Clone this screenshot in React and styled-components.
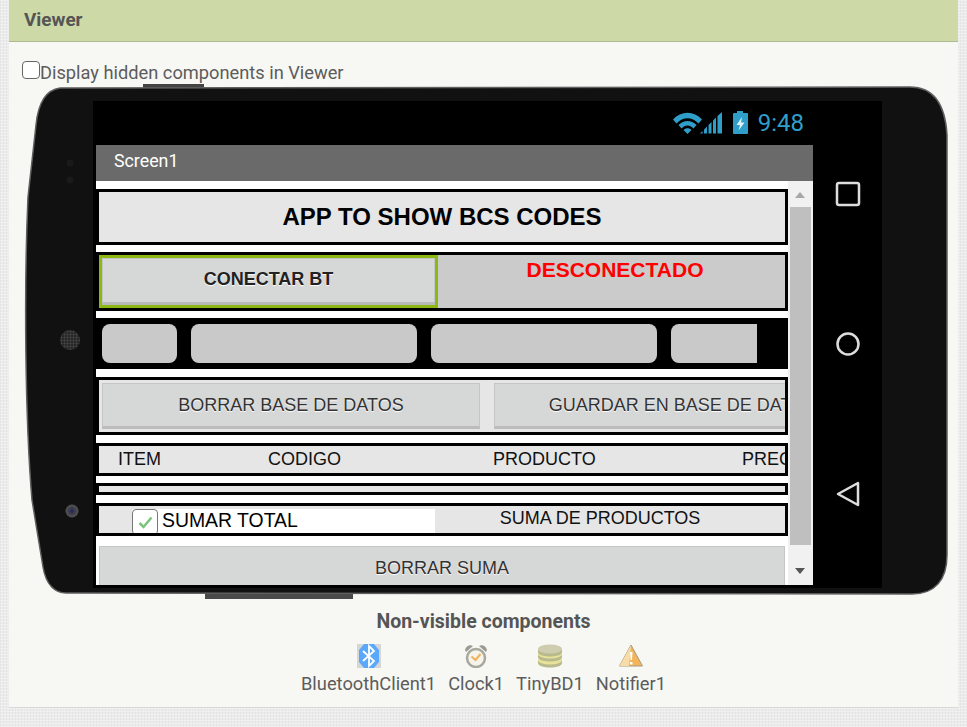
import React from 'react';
import styled, { createGlobalStyle } from 'styled-components';

const GlobalStyle = createGlobalStyle`
  html, body {
    margin: 0;
    padding: 0;
  }
  body {
    height: 727px;
    overflow: hidden;
    background-color: #ebebeb;
    background-image:
      repeating-linear-gradient(0deg, rgba(255,255,255,.35) 0 1px, transparent 1px 3px),
      repeating-linear-gradient(90deg, rgba(0,0,0,.03) 0 1px, transparent 1px 3px);
    font-family: Roboto, "Liberation Sans", sans-serif;
  }
`;

const Panel = styled.section`
  width: 949px;
  height: 708px;
  margin-left: 9px;
  background: #f7f8f3;
  color: #555;
  border-bottom: 1px solid #d8d8d8;
  box-sizing: border-box;
`;

const PanelHeader = styled.header`
  height: 42px;
  box-sizing: border-box;
  padding: 0 0 3px 15px;
  display: flex;
  align-items: center;
  background: #cddaa8;
  border-bottom: 1px solid #aebb90;
  font-size: 18.9px;
  font-weight: 700;
  color: #555;
`;

const HiddenToggle = styled.label`
  height: 45px;
  box-sizing: border-box;
  padding: 18px 0 0 13px;
  display: flex;
  align-items: flex-start;
  font-size: 18.25px;
  line-height: 26px;
  color: #5c5c5c;
`;

const ToggleBox = styled.input`
  appearance: none;
  width: 18px;
  height: 18px;
  margin: 1px 0 0;
  box-sizing: border-box;
  background: #fff;
  border: 1.5px solid #666;
  border-radius: 4px;
`;

const Phone = styled.div`
  position: relative;
  width: 920px;
  height: 508px;
  margin-left: 18px;
  box-sizing: border-box;
  padding: 14px 0 0 66px;
`;

const PhoneShell = styled.svg`
  position: absolute;
  left: 0;
  top: -3px;
  overflow: visible;
`;

const PhoneScreen = styled.div`
  position: relative;
  width: 789px;
  height: 487px;
  box-sizing: border-box;
  padding: 0 0 0 3px;
  display: flex;
  background: #000;
`;

const ScreenMain = styled.div`
  width: 717px;
`;

const StatusBar = styled.div`
  height: 44px;
  box-sizing: border-box;
  padding: 0 9px 0 0;
  display: flex;
  align-items: center;
  justify-content: flex-end;
  gap: 9px;
  color: #2f9fca;
  font-size: 24px;
  font-weight: 400;
`;

const TitleBar = styled.div`
  height: 36px;
  box-sizing: border-box;
  padding: 0 0 5px 18px;
  display: flex;
  align-items: center;
  background: #6a6a6a;
  color: #fff;
  font-size: 17.8px;
`;

const ScreenBody = styled.div`
  height: 404px;
  display: flex;
  overflow: hidden;
  background: #fff;
  font-family: "Liberation Sans", Arial, sans-serif;
`;

const RowList = styled.div`
  width: 692px;
  box-sizing: border-box;
  padding-top: 8px;
  display: flex;
  flex-direction: column;
`;

const Row = styled.div`
  height: ${(p) => p.$h}px;
  margin-bottom: ${(p) => p.$gap}px;
  flex: none;
  box-sizing: border-box;
  border: 3px solid #000;
  background: ${(p) => p.$bg || '#e6e6e6'};
  display: flex;
  align-items: ${(p) => p.$align || 'center'};
  overflow: hidden;
`;

const AppTitle = styled.div`
  width: 100%;
  text-align: center;
  color: #000;
  font-size: 24px;
  font-weight: 700;
`;

const ConnectButton = styled.div`
  width: 339px;
  height: 53px;
  flex: none;
  box-sizing: border-box;
  padding-bottom: 4px;
  border: 3px solid #8cb814;
  background: #d6d8d7;
  box-shadow: inset 0 -3px 0 #b9b9b9, inset 0 0 0 1px #c4c6c5;
  display: flex;
  align-items: center;
  justify-content: center;
  color: #222;
  font-size: 18px;
  font-weight: 700;
  text-shadow: 0 1px 1px #fff;
`;

const StatusText = styled.div`
  width: 354px;
  padding: 3px 0 0;
  flex: none;
  text-align: center;
  color: #f00;
  font-size: 21px;
  font-weight: 700;
`;

const FieldRow = styled(Row)`
  padding-left: 3px;
  gap: 14px;
`;

const Field = styled.div`
  width: ${(p) => p.$w}px;
  height: 39px;
  flex: none;
  background: #c9c9c9;
  border-radius: ${(p) => (p.$cut ? '8px 0 0 8px' : '8px')};
`;

const ButtonRow = styled(Row)`
  padding-left: 3px;
  gap: 14px;
`;

const GrayButton = styled.div`
  width: 378px;
  height: 46px;
  flex: none;
  box-sizing: border-box;
  border: 1px solid #c4c6c5;
  border-bottom: 3px solid #bcbcbc;
  background: #d6d8d7;
  display: flex;
  align-items: center;
  justify-content: center;
  white-space: nowrap;
  color: #333;
  font-size: 18px;
  text-shadow: 0 1px 1px #fff;
`;

const ColumnLabel = styled.div`
  width: ${(p) => p.$w}px;
  flex: none;
  color: #111;
  font-size: 18px;
  white-space: nowrap;
`;

const HeaderRow = styled(Row)`
  padding-left: 19px;
`;

const TotalCheck = styled.div`
  width: 303px;
  height: 24px;
  margin: 3px 0 0 33px;
  flex: none;
  display: flex;
  align-items: flex-start;
  background: #fff;
  color: #000;
  font-size: 19.4px;
  line-height: 22px;
`;

const CheckBox = styled.span`
  width: 26px;
  height: 26px;
  margin-right: 4px;
  flex: none;
  box-sizing: border-box;
  display: flex;
  align-items: center;
  justify-content: center;
  border: 1.5px solid #777;
  border-radius: 4px;
  background: #fff;
`;

const SumLabel = styled.div`
  width: 330px;
  padding-top: 2px;
  flex: none;
  text-align: center;
  color: #111;
  font-size: 18px;
`;

const WideButton = styled.div`
  height: 46px;
  margin-left: 3px;
  width: 686px;
  flex: none;
  box-sizing: border-box;
  border: 1px solid #c4c6c5;
  background: #d6d8d7;
  padding-top: 11px;
  text-align: center;
  color: #333;
  font-size: 18px;
  text-shadow: 0 1px 1px #fff;
`;

const ScrollTrack = styled.div`
  position: relative;
  width: 25px;
  height: 404px;
  background: #f1f1f1;
`;

const ScrollThumb = styled.div`
  width: 21px;
  height: 338px;
  margin: 26px 0 0 2px;
  background: #bfbfbf;
`;

const ScrollArrow = styled.span`
  position: absolute;
  left: 7px;
  ${(p) => (p.$down ? 'bottom: 11px;' : 'top: 11px;')}
  border-left: 5.5px solid transparent;
  border-right: 5.5px solid transparent;
  ${(p) => (p.$down ? 'border-top: 6px solid #555;' : 'border-bottom: 6px solid #a8a8a8;')}
`;

const NavColumn = styled.div`
  width: 69px;
  box-sizing: border-box;
  padding-top: 80px;
  display: flex;
  flex-direction: column;
  align-items: center;
  gap: 124px;
`;

const NonVisible = styled.div`
  padding-top: 15px;
  display: flex;
  flex-direction: column;
  align-items: center;
`;

const NonVisibleTitle = styled.div`
  font-size: 19.5px;
  font-weight: 700;
  line-height: 24px;
  color: #555;
`;

const ComponentList = styled.div`
  margin-top: 10px;
  display: flex;
  gap: 12px;
`;

const ComponentItem = styled.div`
  display: flex;
  flex-direction: column;
  align-items: center;
  font-size: 18.3px;
  line-height: 24px;
  color: #5c5c5c;
`;

const ComponentIcon = styled.svg`
  display: block;
  margin-bottom: 4px;
`;

const StatusIcons = () => (
  <svg width="76" height="26" viewBox="0 0 76 26" aria-hidden="true">
    <g fill="#2f9fca">
      <g transform="translate(0 1.5)">
        <path d="M0 8 C8 -1 21 -1 29 8 L25.500 12 C19 5 10 5 3.500 12 Z" />
        <path d="M5.500 13.500 C11 8 18 8 23.500 13.500 L20.500 17 C17 13 12 13 8.500 17 Z" />
        <path d="M10.500 18.500 C13 16 16 16 18.500 18.500 L14.500 22.500 Z" />
      </g>
      <path d="M27 23.500 L29.500 21 V23.500 Z" />
      <path d="M31 23.500 V19.500 L34 16.500 V23.500 Z" />
      <path d="M35.500 23.500 V15 L38.500 12 V23.500 Z" />
      <path d="M40 23.500 V10.500 L43 7.500 V23.500 Z" />
      <path d="M44.500 23.500 V6 L49 2 V23.500 Z" />
      <path d="M64 1 H70 V3 H74 A1 1 0 0 1 75 4 V23 A1 1 0 0 1 74 24 H61 A1 1 0 0 1 60 23 V4 A1 1 0 0 1 61 3 H64 Z" />
    </g>
    <path d="M69 7 L63.500 15 L67 15 L65.500 20.500 L71.500 12.500 L68 12.500 Z" fill="#dff3fb" />
  </svg>
);

const BluetoothIcon = () => (
  <ComponentIcon width="24" height="24" viewBox="0 0 24 24">
    <rect width="24" height="24" fill="#d6d6d6" />
    <path d="M7 0 H17 L22 6 V18 L17 24 H7 L2 18 V6 Z" fill="#5aa8fb" />
    <path d="M6 7 L17 17 L12 22 V2 L17 7 L6 17" fill="none" stroke="#fff" strokeWidth="1.800" />
  </ComponentIcon>
);

const ClockIcon = () => (
  <ComponentIcon width="24" height="24" viewBox="0 0 24 24">
    <path d="M1 6 C2 2 6 0 9 2 L2 8 Z M23 6 C22 2 18 0 15 2 L22 8 Z" fill="#9a9a90" />
    <circle cx="12" cy="14" r="9" fill="#f5f3ea" stroke="#a8a89e" strokeWidth="2.500" />
    <path d="M7.500 12.500 L11.500 16 L16.500 10" fill="none" stroke="#f0b35c" strokeWidth="2" />
  </ComponentIcon>
);

const DatabaseIcon = () => (
  <ComponentIcon width="24" height="24" viewBox="0 0 24 24">
    <path d="M0 15 v4 c0 6 24 6 24 0 v-4 Z" fill="#b9b98e" />
    <ellipse cx="12" cy="16" rx="12" ry="4.500" fill="#e8e39a" />
    <path d="M0 9 v4 c0 6 24 6 24 0 v-4 Z" fill="#b9b98e" />
    <ellipse cx="12" cy="10" rx="12" ry="4.500" fill="#e8e39a" />
    <path d="M0 5 v3 c0 6 24 6 24 0 v-3 Z" fill="#b9b98e" />
    <ellipse cx="12" cy="5" rx="12" ry="4.500" fill="#cfcdb0" />
  </ComponentIcon>
);

const WarningIcon = () => (
  <ComponentIcon width="24" height="24" viewBox="0 0 24 24">
    <path d="M12 1 L23.500 22 H0.500 Z" fill="#f3b45c" stroke="#a89a80" strokeWidth="1" />
    <path d="M12 1 L0.500 22 H10 Z" fill="#f8dca8" />
    <path d="M11 8 h2.500 l-.5 8 h-1.500 Z M11 18 h2.500 v2.500 h-2.500 Z" fill="#fff" />
  </ComponentIcon>
);

const App = () => (
  <>
    <GlobalStyle />
    <Panel>
      <PanelHeader>Viewer</PanelHeader>
      <HiddenToggle>
        <ToggleBox type="checkbox" />
        Display hidden components in Viewer
      </HiddenToggle>

      <Phone>
        <PhoneShell width="920" height="515" viewBox="0 -3 920 515" aria-hidden="true">
          <defs>
            <pattern id="speakerDots" width="3" height="3" patternUnits="userSpaceOnUse">
              <rect width="3" height="3" fill="#262626" />
              <circle cx="1.500" cy="1.500" r="1" fill="#4a4a4a" />
            </pattern>
            <radialGradient id="lens">
              <stop offset="0" stopColor="#20206a" />
              <stop offset="0.4" stopColor="#3a3a4a" />
              <stop offset="1" stopColor="#555" />
            </radialGradient>
          </defs>
          <rect x="116" y="-3" width="61" height="5" fill="#444" />
          <rect x="178" y="504" width="148" height="8" fill="#4a4a4a" />
          <path
            d="M33 1 L883 0 C903 0 918 13 920 48 L920 468 C920 493 908 507 885 507 L39 506 C28 506 19 498 16 480 L5 413 C-2 330 -3 200 1 110 L9 38 C11 18 18 3 33 1 Z"
            fill="#111"
            stroke="#5f5f5f"
            strokeWidth="1.500"
          />
          <circle cx="43" cy="76" r="3.500" fill="#1a1a1a" />
          <circle cx="43" cy="93" r="3.500" fill="#1a1a1a" />
          <circle cx="43" cy="253" r="10" fill="url(#speakerDots)" />
          <circle cx="45" cy="424" r="6.500" fill="url(#lens)" />
        </PhoneShell>

        <PhoneScreen>
          <ScreenMain>
            <StatusBar>
              <StatusIcons />
              <span>9:48</span>
            </StatusBar>
            <TitleBar>Screen1</TitleBar>
            <ScreenBody>
              <RowList>
                <Row $h={56} $gap={7}>
                  <AppTitle>APP TO SHOW BCS CODES</AppTitle>
                </Row>
                <Row $h={59} $gap={7} $bg="#cbcbcb" $align="flex-start">
                  <ConnectButton>CONECTAR BT</ConnectButton>
                  <StatusText>DESCONECTADO</StatusText>
                </Row>
                <FieldRow $h={51} $gap={8} $bg="#000">
                  <Field $w={75} />
                  <Field $w={226} />
                  <Field $w={226} />
                  <Field $w={86} $cut />
                </FieldRow>
                <ButtonRow $h={58} $gap={8}>
                  <GrayButton>BORRAR BASE DE DATOS</GrayButton>
                  <GrayButton>GUARDAR EN BASE DE DATOS</GrayButton>
                </ButtonRow>
                <HeaderRow $h={33} $gap={7}>
                  <ColumnLabel $w={150}>ITEM</ColumnLabel>
                  <ColumnLabel $w={225}>CODIGO</ColumnLabel>
                  <ColumnLabel $w={249}>PRODUCTO</ColumnLabel>
                  <ColumnLabel $w={60}>PRECIO</ColumnLabel>
                </HeaderRow>
                <Row $h={12} $gap={8} />
                <Row $h={33} $gap={10} $align="flex-start">
                  <TotalCheck>
                    <CheckBox>
                      <svg width="15" height="13" viewBox="0 0 15 13" aria-hidden="true">
                        <path d="M1.500 7 L5.500 11 L13.500 1.500" fill="none" stroke="#7cc47c" strokeWidth="2.500" />
                      </svg>
                    </CheckBox>
                    SUMAR TOTAL
                  </TotalCheck>
                  <SumLabel>SUMA DE PRODUCTOS</SumLabel>
                </Row>
                <WideButton>BORRAR SUMA</WideButton>
              </RowList>
              <ScrollTrack>
                <ScrollArrow />
                <ScrollThumb />
                <ScrollArrow $down />
              </ScrollTrack>
            </ScreenBody>
          </ScreenMain>

          <NavColumn>
            <svg width="26" height="26" viewBox="0 0 26 26" aria-hidden="true">
              <rect x="2" y="2" width="22" height="22" rx="2" fill="none" stroke="#ddd" strokeWidth="2.500" />
            </svg>
            <svg width="26" height="26" viewBox="0 0 26 26" aria-hidden="true">
              <circle cx="13" cy="13" r="10.500" fill="none" stroke="#ddd" strokeWidth="2.500" />
            </svg>
            <svg width="26" height="26" viewBox="0 0 26 26" aria-hidden="true">
              <path d="M3 13 L23 2 V24 Z" fill="none" stroke="#ddd" strokeWidth="2.500" strokeLinejoin="round" />
            </svg>
          </NavColumn>
        </PhoneScreen>
      </Phone>

      <NonVisible>
        <NonVisibleTitle>Non-visible components</NonVisibleTitle>
        <ComponentList>
          <ComponentItem>
            <BluetoothIcon />
            BluetoothClient1
          </ComponentItem>
          <ComponentItem>
            <ClockIcon />
            Clock1
          </ComponentItem>
          <ComponentItem>
            <DatabaseIcon />
            TinyBD1
          </ComponentItem>
          <ComponentItem>
            <WarningIcon />
            Notifier1
          </ComponentItem>
        </ComponentList>
      </NonVisible>
    </Panel>
  </>
);

export default App;
